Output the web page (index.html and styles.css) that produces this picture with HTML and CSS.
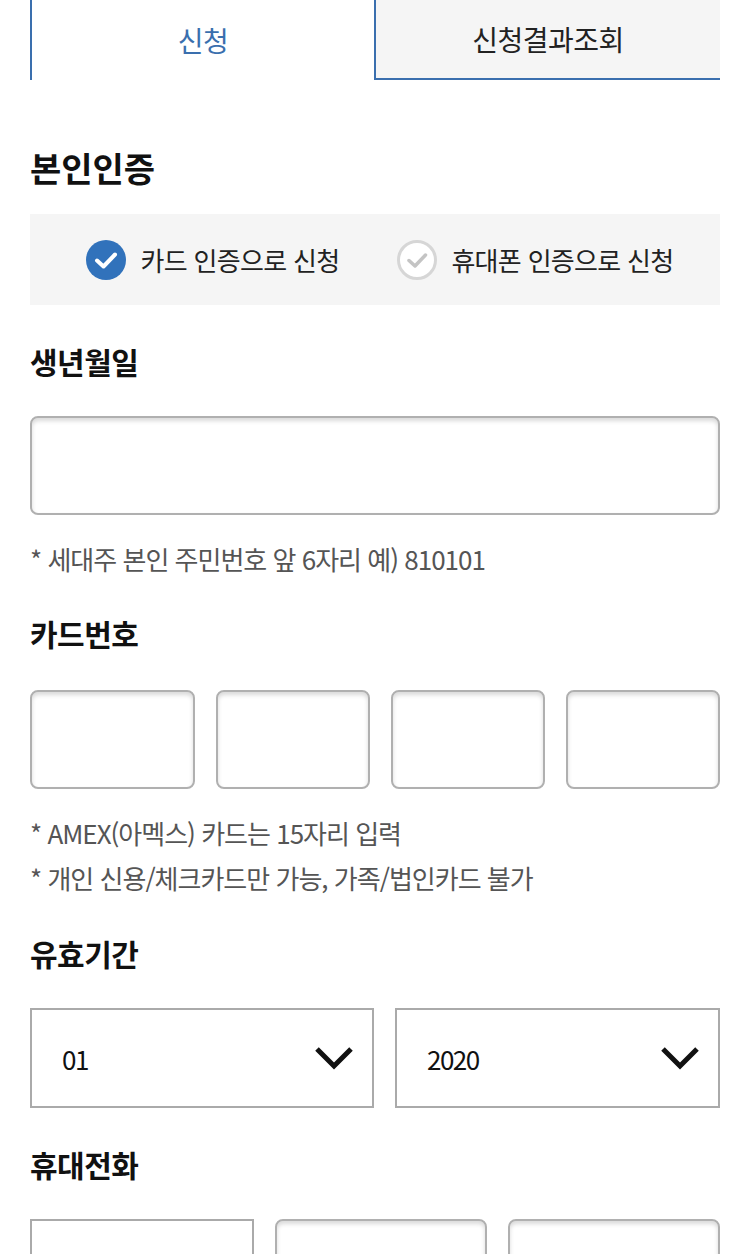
FILE: index.html
```html
<!DOCTYPE html>
<html lang="ko">
<head>
  <meta charset="UTF-8">
  <title>신청</title>
  <link rel="stylesheet" href="styles.css">
</head>
<body>
  <div class="page">
    <div class="tabs">
      <div class="tab active">신청</div>
      <div class="tab">신청결과조회</div>
    </div>

    <!-- 본인인증 -->
    <h2 class="title first">본인인증</h2>
    <div class="auth-box">
      <label class="radio checked">
        <svg class="radio-icon" viewBox="0 0 40 40">
          <circle cx="20" cy="20" r="20" fill="#3172bb"/>
          <path d="M11 20.5 L17.5 26.5 L29 14.5" fill="none" stroke="#fff" stroke-width="4" stroke-linecap="round" stroke-linejoin="round"/>
        </svg>
        <span>카드 인증으로 신청</span>
      </label>
      <label class="radio">
        <svg class="radio-icon" viewBox="0 0 40 40">
          <circle cx="20" cy="20" r="18.5" fill="#fff" stroke="#d6d6d6" stroke-width="3"/>
          <path d="M12 20.5 L18 26 L28.5 15" fill="none" stroke="#c4c4c4" stroke-width="3.5" stroke-linecap="round" stroke-linejoin="round"/>
        </svg>
        <span>휴대폰 인증으로 신청</span>
      </label>
    </div>

    <!-- 생년월일 -->
    <h2 class="title">생년월일</h2>
    <input class="field" type="text">
    <p class="note">* 세대주 본인 주민번호 앞 6자리 예) 810101</p>

    <!-- 카드번호 -->
    <h2 class="title">카드번호</h2>
    <div class="row card-row">
      <input class="field" type="text">
      <input class="field" type="text">
      <input class="field" type="text">
      <input class="field" type="text">
    </div>
    <div class="notes">
      <p>* AMEX(아멕스) 카드는 15자리 입력</p>
      <p>* 개인 신용/체크카드만 가능, 가족/법인카드 불가</p>
    </div>

    <!-- 유효기간 -->
    <h2 class="title after-notes">유효기간</h2>
    <div class="row date-row">
      <div class="select">
        <span>01</span>
        <svg class="chevron" viewBox="0 0 40 24"><path d="M3 3 L20 20 L37 3" fill="none" stroke="#111" stroke-width="5"/></svg>
      </div>
      <div class="select">
        <span>2020</span>
        <svg class="chevron" viewBox="0 0 40 24"><path d="M3 3 L20 20 L37 3" fill="none" stroke="#111" stroke-width="5"/></svg>
      </div>
    </div>

    <!-- 휴대전화 -->
    <h2 class="title">휴대전화</h2>
    <div class="row phone-row">
      <div class="select"></div>
      <input class="field" type="text">
      <input class="field" type="text">
    </div>
  </div>
</body>
</html>
```

FILE: styles.css
```css
* {
  box-sizing: border-box;
}

body {
  margin: 0;
  background: #fff;
  font-family: "Noto Sans CJK KR", "Noto Sans", sans-serif;
  color: #111;
}

.page {
  padding: 0 30px;
}

.tabs {
  display: flex;
  height: 80px;
}

.tab {
  display: flex;
  align-items: center;
  justify-content: center;
  font-size: 28px;
  letter-spacing: -0.5px;
  color: #222;
  border-left: 2px solid #3a6fae;
}

.tab.active {
  flex: 0 0 344px;
  color: #3a6fae;
  background: #fff;
}

.tab:not(.active) {
  flex: 1;
  background: #f5f5f5;
  border-bottom: 2px solid #3a6fae;
}

.title {
  margin: 36px 0 35px;
  font-size: 30px;
  font-weight: bold;
  line-height: 40px;
  letter-spacing: -0.5px;
}

.title.first {
  margin: 68px 0 26px;
  font-size: 34px;
  letter-spacing: 0;
}

.title.after-notes {
  margin-top: 33px;
}

.auth-box {
  display: flex;
  justify-content: center;
  align-items: center;
  gap: 58px;
  height: 91px;
  padding-left: 10px;
  background: #f5f5f5;
}

.radio {
  display: flex;
  align-items: center;
  gap: 14px;
  font-size: 26px;
  letter-spacing: -0.7px;
  color: #222;
}

.radio-icon {
  width: 40px;
  height: 40px;
}

.field {
  display: block;
  width: 100%;
  height: 99px;
  margin: 0;
  border: 2px solid #b0b0b0;
  border-radius: 8px;
  background: #fff;
  box-shadow: inset 0 3px 4px rgba(0, 0, 0, 0.15);
  font-family: inherit;
}

.note,
.notes p {
  margin: 0;
  font-size: 26px;
  letter-spacing: -1px;
  color: #555;
}

.note {
  margin-top: 26px;
  line-height: 36px;
}

.notes {
  margin-top: 21px;
}

.notes p {
  line-height: 45px;
}

.row {
  display: grid;
  gap: 21px;
}

.card-row {
  grid-template-columns: 165px 1fr 1fr 1fr;
  margin-top: 37px;
}

.date-row {
  grid-template-columns: 344px 1fr;
}

.phone-row {
  grid-template-columns: 224px 1fr 1fr;
}

.select {
  display: flex;
  align-items: center;
  justify-content: space-between;
  height: 100px;
  padding: 0 18px 0 30px;
  border: 2px solid #aaa;
  background: #fff;
  font-size: 26px;
  letter-spacing: -1.5px;
  color: #111;
}

.chevron {
  width: 40px;
  height: 24px;
}
```
